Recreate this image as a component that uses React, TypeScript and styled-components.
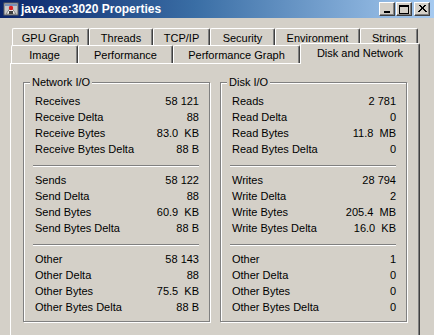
import React from 'react';
import styled, { createGlobalStyle } from 'styled-components';

const GlobalStyle = createGlobalStyle`
  html, body {
    margin: 0;
    padding: 0;
    background: #d4d0c8;
  }
  body {
    font-family: "Liberation Sans", Arial, sans-serif;
    font-size: 11px;
    color: #000;
  }
`;

// tab rows, back row first; widths measured off the dialog
const backTabs = [
  { label: 'GPU Graph', width: 77 },
  { label: 'Threads', width: 64 },
  { label: 'TCP/IP', width: 57 },
  { label: 'Security', width: 65 },
  { label: 'Environment', width: 85 },
  { label: 'Strings', width: 58 },
];

const frontTabs = [
  { label: 'Image', width: 67 },
  { label: 'Performance', width: 95 },
  { label: 'Performance Graph', width: 127 },
  { label: 'Disk and Network', width: 120, selected: true },
];

type Row = [string, string];

const networkIO: Row[][] = [
  [
    ['Receives', '58 121'],
    ['Receive Delta', '88'],
    ['Receive Bytes', '83.0  KB'],
    ['Receive Bytes Delta', '88 B'],
  ],
  [
    ['Sends', '58 122'],
    ['Send Delta', '88'],
    ['Send Bytes', '60.9  KB'],
    ['Send Bytes Delta', '88 B'],
  ],
  [
    ['Other', '58 143'],
    ['Other Delta', '88'],
    ['Other Bytes', '75.5  KB'],
    ['Other Bytes Delta', '88 B'],
  ],
];

const diskIO: Row[][] = [
  [
    ['Reads', '2 781'],
    ['Read Delta', '0'],
    ['Read Bytes', '11.8  MB'],
    ['Read Bytes Delta', '0'],
  ],
  [
    ['Writes', '28 794'],
    ['Write Delta', '2'],
    ['Write Bytes', '205.4  MB'],
    ['Write Bytes Delta', '16.0  KB'],
  ],
  [
    ['Other', '1'],
    ['Other Delta', '0'],
    ['Other Bytes', '0'],
    ['Other Bytes Delta', '0'],
  ],
];

const Window = styled.div`
  width: 434px;
  height: 335px;
  overflow: hidden;
  background: #d4d0c8;
  display: flex;
  flex-direction: column;
`;

const TitleBar = styled.div`
  height: 18px;
  flex-shrink: 0;
  display: flex;
  align-items: center;
  padding: 0 4px 0 3px;
  background: linear-gradient(to right, #0a246a 0%, #3a6ea5 45%, #a6caf0 100%);
`;

const TitleIcon = styled.svg`
  width: 16px;
  height: 16px;
  flex-shrink: 0;
`;

const TitleText = styled.span`
  margin-left: 2px;
  flex: 1;
  color: #fff;
  font-weight: bold;
  font-size: 12px;
  white-space: nowrap;
`;

const CaptionButtons = styled.div`
  display: flex;
  align-items: center;
`;

const CaptionButton = styled.div<{ $gap?: number }>`
  width: 16px;
  height: 14px;
  box-sizing: border-box;
  margin-left: ${({ $gap }) => $gap ?? 0}px;
  background: #d4d0c8;
  border-top: 1px solid #fff;
  border-left: 1px solid #fff;
  border-right: 1px solid #404040;
  border-bottom: 1px solid #404040;
  box-shadow: inset -1px -1px 0 #808080;
  display: flex;
  align-items: center;
  justify-content: center;

  svg {
    display: block;
  }
`;

const TabStrip = styled.div`
  margin-top: 10px;
  padding-left: 10px;
  display: flex;
  flex-direction: column;
`;

const TabRow = styled.div<{ $indent: number; $height: number }>`
  display: flex;
  align-items: flex-end;
  height: ${({ $height }) => $height}px;
  padding-left: ${({ $indent }) => $indent}px;
  position: relative;
`;

const Tab = styled.div<{ $selected?: boolean }>`
  box-sizing: border-box;
  height: ${({ $selected }) => ($selected ? 21 : 18)}px;
  flex-shrink: 0;
  display: flex;
  align-items: center;
  justify-content: center;
  padding-bottom: ${({ $selected }) => ($selected ? 3 : 0)}px;
  background: #d4d0c8;
  border-top: 1px solid #fff;
  border-left: 1px solid #fff;
  border-right: 1px solid #404040;
  border-radius: 2px 2px 0 0;
  box-shadow: inset -1px 0 0 #808080;
  white-space: nowrap;
  position: relative;
  z-index: ${({ $selected }) => ($selected ? 2 : 0)};
  margin-bottom: ${({ $selected }) => ($selected ? -1 : 0)}px;
`;

const Panel = styled.div`
  position: relative;
  z-index: 1;
  width: 410px;
  height: 300px;
  box-sizing: border-box;
  flex-shrink: 0;
  border-top: 1px solid #fff;
  border-left: 1px solid #fff;
  border-right: 1px solid #404040;
  box-shadow: inset -1px 0 0 #808080;
  padding: 18px 12px 0 12px;
  display: flex;
  gap: 10px;
  align-items: flex-start;
`;

const GroupBox = styled.div`
  position: relative;
  width: 187px;
  box-sizing: border-box;
  border: 1px solid #808080;
  box-shadow: inset 1px 1px 0 #fff, 1px 1px 0 #fff;
  padding: 10px 10px 6px 11px;
`;

const GroupCaption = styled.span`
  position: absolute;
  top: -7px;
  left: 6px;
  padding: 0 2px;
  line-height: 13px;
  background: #d4d0c8;
`;

const Section = styled.div`
  display: flex;
  flex-direction: column;
`;

const StatRow = styled.div`
  display: flex;
  justify-content: space-between;
  height: 16px;
  line-height: 16px;
`;

const StatValue = styled.span`
  white-space: pre;
`;

const Separator = styled.div`
  height: 1px;
  margin: 8px 0 5px -2px;
  border-top: 1px solid #808080;
  background: #fff;
  height: 1px;
`;

const Group = ({ title, sections }: { title: string; sections: Row[][] }) => (
  <GroupBox>
    <GroupCaption>{title}</GroupCaption>
    {sections.map((rows, i) => (
      <React.Fragment key={i}>
        {i > 0 && <Separator />}
        <Section>
          {rows.map(([label, value]) => (
            <StatRow key={label}>
              <span>{label}</span>
              <StatValue>{value}</StatValue>
            </StatRow>
          ))}
        </Section>
      </React.Fragment>
    ))}
  </GroupBox>
);

const JavaIcon = () => (
  <TitleIcon viewBox="0 0 16 16">
    <rect x="1" y="2" width="14" height="12" fill="#c8c8c8" stroke="#606060" />
    <rect x="2" y="3" width="12" height="2" fill="#7890b8" />
    <path d="M3 13 L8 6 L13 13 Z" fill="#f4f4f4" stroke="#707070" strokeWidth="0.8" />
    <circle cx="8" cy="7" r="2.2" fill="#e02020" />
    <rect x="6" y="10" width="4" height="3" fill="#404040" />
  </TitleIcon>
);

const App: React.FC = () => {
  return (
    <>
      <GlobalStyle />
      <Window>
        <TitleBar>
          <JavaIcon />
          <TitleText>java.exe:3020 Properties</TitleText>
          <CaptionButtons>
            <CaptionButton>
              <svg width="8" height="8" viewBox="0 0 8 8">
                <rect x="1" y="6" width="6" height="2" fill="#000" />
              </svg>
            </CaptionButton>
            <CaptionButton $gap={1}>
              <svg width="10" height="9" viewBox="0 0 10 9">
                <rect x="0.5" y="0.5" width="9" height="8" fill="none" stroke="#000" />
                <rect x="0" y="0" width="10" height="2" fill="#000" />
              </svg>
            </CaptionButton>
            <CaptionButton $gap={2}>
              <svg width="9" height="8" viewBox="0 0 9 8">
                <path d="M1 0 L8 7 M8 0 L1 7 M2 0 L9 7 M7 0 L0 7" stroke="#000" strokeWidth="1" />
              </svg>
            </CaptionButton>
          </CaptionButtons>
        </TitleBar>

        <TabStrip>
          <TabRow $indent={2} $height={18}>
            {backTabs.map(t => (
              <Tab key={t.label} style={{ width: t.width }}>
                {t.label}
              </Tab>
            ))}
          </TabRow>
          <TabRow $indent={1} $height={17}>
            {frontTabs.map(t => (
              <Tab key={t.label} $selected={t.selected} style={{ width: t.width }}>
                {t.label}
              </Tab>
            ))}
          </TabRow>
          <Panel>
            <Group title="Network I/O" sections={networkIO} />
            <Group title="Disk I/O" sections={diskIO} />
          </Panel>
        </TabStrip>
      </Window>
    </>
  );
};

export default App;
